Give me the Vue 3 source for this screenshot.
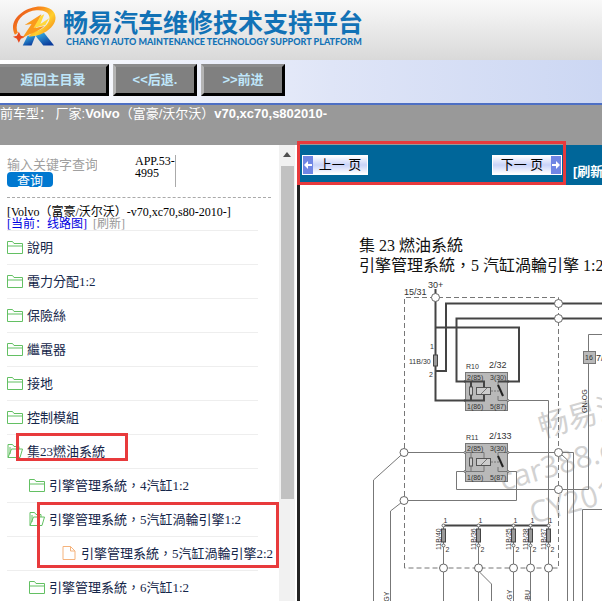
<template>
  <div class="page">
    <header class="banner">
      <svg class="logo" viewBox="0 0 46 42" aria-hidden="true">
        <defs>
          <linearGradient id="ring" x1="0" y1="0" x2="1" y2="0.6">
            <stop offset="0" stop-color="#e2401c" />
            <stop offset="0.5" stop-color="#f98a1c" />
            <stop offset="0.8" stop-color="#ffd02e" />
            <stop offset="1" stop-color="#f79a1c" />
          </linearGradient>
          <linearGradient id="leg" x1="0" y1="0" x2="0.6" y2="1">
            <stop offset="0" stop-color="#3cc0ee" />
            <stop offset="1" stop-color="#0b3c9c" />
          </linearGradient>
        </defs>
        <path d="M16 31 H24 L20 41 H11 Z" fill="url(#leg)" />
        <path d="M24 31 L32 27 L43 41 H32 Z" fill="url(#leg)" />
        <path d="M3 30 C-5 15 13 1 29 1 C43 1 48 11 42 20 C37 27 29 31 17 32 L21 27 C29 26 36 21 38 15 C40 8 33 4 25 5 C12 6 1 17 6 28 Z" fill="url(#ring)" />
        <path d="M13 20 L30 9 L24 23 L33 21 C26 28 18 28 10 34 L20 19 Z" fill="#fa9a1c" />
        <path d="M29 11 L22 23 L34 20 L38 13 L29 19 L33 9 Z" fill="#ffd83a" />
        <path d="M7 27 L9 31 L13 32 L9 34 L7 38 L5 34 L1 32 L5 31 Z" fill="#e8481c" />
      </svg>
      <div class="brand">
        <h1>畅易汽车维修技术支持平台</h1>
        <p>CHANG YI AUTO MAINTENANCE TECHNOLOGY SUPPORT PLATFORM</p>
      </div>
    </header>

    <nav class="toolbar">
      <button class="home">返回主目录</button>
      <button>&lt;&lt;后退.</button>
      <button>&gt;&gt;前进</button>
    </nav>

    <div class="model">前车型： 厂家:<b>Volvo</b>（富豪/沃尔沃）<b>v70,xc70,s802010-</b></div>

    <div class="frames">
      <aside class="side">
        <div class="side-body">
          <div class="search">
            <div class="search-form">
              <input v-model="keyword" type="text" placeholder="输入关键字查询" aria-label="输入关键字查询" />
              <button>查询</button>
            </div>
            <div class="version">APP.53-4995</div>
          </div>
          <div class="current">
            <div>[Volvo（富豪/沃尔沃）-v70,xc70,s80-2010-]</div>
            <div>
              <a class="now" href="#">[当前：线路图]</a>
              <a class="refresh" href="#">[刷新]</a>
            </div>
          </div>
          <ul class="tree">
            <li v-for="item in items" :key="item.text" :class="'level' + item.level">
              <svg v-if="item.icon === 'folder'" class="icon" viewBox="0 0 16 16">
                <path d="M0.5 14.5 V2.5 H5.5 L7 4.5 H15.5 V14.5 Z M0.5 7 H15.5" />
              </svg>
              <svg v-else-if="item.icon === 'open'" class="icon" viewBox="0 0 16 16">
                <path d="M1 14.5 V1.5 H5.5 L7 3.5 H12 V6 M1 14.5 L4.5 6 H15.5 L13 14.5 Z M3 11 V4" />
              </svg>
              <svg v-else class="icon file" viewBox="0 0 16 16">
                <path d="M1 1.5 H8.5 L13 6 V14.5 H1 Z M8.5 1.5 V6 H13" />
              </svg>
              <a href="#">{{ item.text }}</a>
              <span v-if="item.mark" :class="['mark', item.mark]"></span>
            </li>
          </ul>
        </div>
        <div class="scrollbar">
          <span class="arrow"></span>
          <span class="thumb"></span>
        </div>
      </aside>

      <main class="view">
        <div class="pager">
          <button class="prev">
            <svg viewBox="0 0 10 18"><path d="M1 9 L5 5 V8 H9 V10 H5 V13 Z" /></svg>
            <span>上一 页</span>
          </button>
          <button class="next">
            <span>下一 页</span>
            <svg viewBox="0 0 10 18"><path d="M9 9 L5 5 V8 H1 V10 H5 V13 Z" /></svg>
          </button>
          <a href="#">[刷新]</a>
          <span class="mark mark-pager"></span>
        </div>

        <svg class="diagram" viewBox="300 185 302 416">
          <g class="title">
            <text x="359" y="251">集 23 燃油系統</text>
            <text x="359" y="271">引擎管理系統，5 汽缸渦輪引擎 1:2</text>
          </g>

          <g class="watermark">
            <text transform="translate(542 438) rotate(-16)">畅易汽车</text>
            <text transform="translate(503 491) rotate(-16)">car388.com</text>
            <text transform="translate(533 524) rotate(-16)">CY2019</text>
          </g>

          <path class="dash" d="M404.5 568 V297.5 H558.5 V568 Z" />

          <g class="thin">
            <path d="M508 400.5 H548.5 V601" />
            <path d="M508 452.5 H573.5 V601 M562 455 L567.5 460 V601" />
            <path d="M465 452.5 H404 L373.5 480 V601" />
            <path d="M465 471.5 H456.5 V489.5 H588.5 V334.5 H602" />
            <path d="M508 471.5 H516.5 V500.5 H404 L390.5 511 V601" />
            <path d="M443.5 525 V601 M478.5 525 V601 M513.5 525 V601 M530.5 525 V601" />
            <path d="M478.5 571 L491.5 584 V601" />
            <path d="M602 509.5 H582.5 V601" />
          </g>
          <path class="bus" d="M443 525.5 H549" />

          <g v-for="relay in relays" :key="relay.id" :transform="`translate(0 ${relay.dy})`">
            <rect class="box" x="465.5" y="372.5" width="42" height="38" />
            <path class="thin" d="M465 381.5 H484 V400.5 H465 M471 381 V401 M498 381.5 H508 M498 381.5 V386 M498 396 V400.5 H508" />
            <rect class="part" x="469.5" y="387" width="3" height="8" />
            <rect class="part" x="476.5" y="387.5" width="14" height="7" />
            <path class="thin" d="M481 394 L487 388" />
            <path class="thin" d="M491 391 H500" stroke-dasharray="2 1" />
            <path class="switch" d="M498 385 L503 396" />
            <circle v-for="y in [381.5, 400.5]" :key="y" class="node" cx="465" :cy="y" r="1" />
            <circle v-for="y in [381.5, 400.5]" :key="'r' + y" class="node" cx="508" :cy="y" r="1" />
            <g class="pin">
              <text x="467" y="380">2(85)</text>
              <text x="490" y="380">3(30)</text>
              <text x="467" y="409">1(86)</text>
              <text x="490" y="409">5(87)</text>
              <text x="466" y="369">{{ relay.id }}</text>
            </g>
            <text class="code" x="489" y="368">{{ relay.code }}</text>
          </g>

          <g class="thick">
            <path d="M435.5 289 V400.5 H484 V395" />
            <path d="M602 303.5 H446 V371 H435.5" />
            <path d="M602 318.5 H456.5 V381.5 H484 V387" />
            <path d="M435.5 327.5 H519 V381.5 H498" />
            <path d="M471 381.5 V387 M471 395 V400" />
          </g>
          <rect class="fuse" x="433.5" y="355" width="4" height="11" />

          <g class="label">
            <text x="428" y="288">30+</text>
            <text x="404" y="295">15/31</text>
            <text class="small" x="409" y="364">11B/30</text>
            <text class="small" x="430" y="349">1</text>
            <text class="small" x="429" y="377">2</text>
          </g>

          <rect class="box" x="583.5" y="351.5" width="12" height="12" />
          <text class="small" x="585" y="360">16</text>
          <text class="label" x="596" y="361">7/4</text>
          <text class="small" transform="translate(587 413) rotate(-90)">GN-OG</text>

          <g v-for="fuse in fuses" :key="fuse.text">
            <rect class="fuse" :x="fuse.x - 2" y="529" width="4" height="13" />
            <circle class="node" :cx="fuse.x" cy="525.5" r="1.5" />
            <circle class="node" :cx="fuse.x" cy="545.5" r="1.5" />
            <text class="small" :x="fuse.x" y="523">1</text>
            <text class="small" :x="fuse.x + 2" y="552">2</text>
            <text class="small" :transform="`translate(${fuse.x - 3} 550) rotate(-90)`">{{ fuse.text }}</text>
            <circle class="node" :cx="fuse.x" cy="568" r="4" />
          </g>
          <circle v-for="(c, i) in joints" :key="i" class="node" :cx="c[0]" :cy="c[1]" r="4" />

          <text class="small" transform="translate(389 604) rotate(-90)">-GY</text>
          <text class="small" transform="translate(512 602) rotate(-90)">-GY</text>
          <text class="small" transform="translate(530 602) rotate(-90)">-BU</text>
        </svg>
      </main>
    </div>
  </div>
</template>

<script setup>
import { ref } from 'vue'

const keyword = ref('')

const items = [
  { text: '說明', level: 0, icon: 'folder' },
  { text: '電力分配1:2', level: 0, icon: 'folder' },
  { text: '保險絲', level: 0, icon: 'folder' },
  { text: '繼電器', level: 0, icon: 'folder' },
  { text: '接地', level: 0, icon: 'folder' },
  { text: '控制模組', level: 0, icon: 'folder' },
  { text: '集23燃油系統', level: 0, icon: 'open', mark: 'mark-group' },
  { text: '引擎管理系統，4汽缸1:2', level: 1, icon: 'folder' },
  { text: '引擎管理系統，5汽缸渦輪引擎1:2', level: 1, icon: 'open', mark: 'mark-pages' },
  { text: '引擎管理系統，5汽缸渦輪引擎2:2', level: 2, icon: 'file' },
  { text: '引擎管理系統，6汽缸1:2', level: 1, icon: 'folder' }
]

const relays = [
  { id: 'R10', code: '2/32', dy: 0 },
  { id: 'R11', code: '2/133', dy: 71 }
]

const fuses = [
  { x: 443.5, text: '11B/40' },
  { x: 478.5, text: '11B/36' },
  { x: 513.5, text: '11B/35' },
  { x: 530.5, text: '11B/38' },
  { x: 548.5, text: '11B/37' }
]

const joints = [
  [435.5, 297.5],
  [558.5, 303.5],
  [558.5, 318.5],
  [404, 452.5],
  [558.5, 452.5],
  [558.5, 489.5],
  [404, 500.5]
]
</script>

<style>
body {
  background: #fff;
}
</style>

<style scoped>
.page {
  display: flex;
  flex-direction: column;
  height: 100vh;
  overflow: hidden;
  font-family: 'Liberation Sans', 'Noto Sans CJK SC', sans-serif;
  font-size: 13px;
}

a {
  text-decoration: none;
}

.banner {
  display: flex;
  flex: none;
  gap: 6px;
  height: 60px;
  padding: 5px 12px 0;
  box-sizing: border-box;
  background: linear-gradient(#f9f9f9, #d9d9d9);
}

.logo {
  width: 45px;
  height: 42px;
}

.brand {
  color: #1272b6;
  white-space: nowrap;
}

.brand h1 {
  margin: 0;
  font-family: 'Noto Sans CJK SC', sans-serif;
  font-size: 25px;
  line-height: 32px;
}

.brand p {
  margin: 0 0 0 3px;
  font-family: Lato, 'Liberation Sans', sans-serif;
  font-size: 9px;
  font-weight: 900;
  line-height: 10px;
}

.toolbar {
  display: flex;
  flex: none;
  gap: 4px;
  height: 43px;
  padding-top: 4px;
  box-sizing: border-box;
  background: linear-gradient(90deg, #fff, #dfe5f7 55%, #ccd7f3);
}

.toolbar button {
  width: 84px;
  height: 32px;
  padding: 0 0 3px;
  border: 3px solid;
  border-color: #8c8c8c #000 #000 #b4b4b4;
  background: #808080;
  color: #bfe6fa;
  font: bold 13px 'Liberation Sans', 'Noto Sans CJK SC', sans-serif;
}

.toolbar .home {
  width: 109px;
  border-left-width: 0;
}

.model {
  flex: none;
  height: 42px;
  box-sizing: border-box;
  border-top: 2px solid #4d6fc4;
  background: #999;
  color: #fff;
  line-height: 18px;
  white-space: nowrap;
}

.frames {
  display: flex;
  flex: 1;
  min-height: 0;
}

.side {
  display: flex;
  flex: none;
  width: 300px;
  box-sizing: border-box;
  border-right: 3px solid #222;
}

.side-body {
  flex: 1;
  padding: 10px 8px 0 7px;
  overflow: hidden;
  font-family: 'Liberation Serif', 'Noto Sans CJK SC', serif;
}

.search {
  display: flex;
  gap: 38px;
  height: 42px;
  border-bottom: 1px dashed #aaa;
}

.search-form {
  display: flex;
  flex-direction: column;
  align-items: flex-start;
  width: 90px;
}

.search-form input {
  width: 90px;
  height: 17px;
  padding: 3px 0 0;
  box-sizing: border-box;
  border: 0;
  background: none;
  font: 13px/14px 'Liberation Serif', 'Noto Sans CJK SC', serif;
}

.search-form input::placeholder {
  color: #a0a0a0;
}

.search-form button {
  width: 46px;
  height: 15px;
  padding: 0;
  border: 0;
  border-radius: 4px;
  background: #0078d0;
  color: #fff;
  font: 13px/14px 'Noto Sans CJK SC', sans-serif;
}

.version {
  width: 40px;
  height: 32px;
  border-right: 1px solid #aaa;
  font-size: 12px;
  line-height: 12px;
}

.current {
  padding-top: 8px;
  font-size: 12px;
  line-height: 12px;
  white-space: nowrap;
}

.current .now {
  margin-right: 6px;
  color: #0000e0;
}

.current .refresh {
  color: #999;
}

.tree {
  margin: 0;
  padding: 0;
  list-style: none;
}

.tree li {
  display: flex;
  align-items: center;
  gap: 4px;
  position: relative;
  width: 251px;
  height: 34px;
  padding-bottom: 2px;
  box-sizing: border-box;
  border-top: 1px solid #eee;
}

.tree a {
  color: #14264a;
  font-family: 'Liberation Serif', 'Noto Sans CJK TC', serif;
  white-space: nowrap;
}

.tree .level1 {
  padding-left: 22px;
}

.tree .level2 {
  padding-left: 55px;
  gap: 3px;
}

.icon {
  flex: none;
  width: 16px;
  height: 16px;
  fill: none;
  stroke: #63c063;
}

.icon.file {
  stroke: #f5b37c;
}

.mark {
  position: absolute;
  z-index: 1;
  box-sizing: border-box;
  border: 3px solid #e83a3c;
  pointer-events: none;
}

.mark-group {
  top: -2px;
  left: 9px;
  width: 112px;
  height: 28px;
}

.mark-pages {
  top: -1px;
  left: 30px;
  width: 242px;
  height: 66px;
}

.scrollbar {
  display: flex;
  flex: none;
  flex-direction: column;
  align-items: center;
  width: 16px;
  margin-right: 2px;
  background: #f1f1f1;
}

.arrow {
  margin: 7px 0 9px;
  border: 4px solid transparent;
  border-top-width: 0;
  border-bottom: 5px solid #505050;
}

.thumb {
  width: 13px;
  height: 73%;
  background: #c1c1c1;
}

.view {
  flex: 1;
  min-width: 0;
}

.pager {
  display: flex;
  align-items: center;
  position: relative;
  height: 40px;
  padding-left: 2px;
  background: #006699;
}

.pager button {
  display: flex;
  flex: none;
  align-items: center;
  height: 20px;
  padding: 0;
  border: 1px solid #fff;
  background: linear-gradient(#fff, #c9d3f8 50%, #fff);
  color: #000;
  font: 13px/16px 'Liberation Sans', 'Noto Sans CJK SC', sans-serif;
  white-space: nowrap;
}

.pager button span {
  flex: 1;
}

.pager button svg {
  width: 10px;
  height: 18px;
  background: #6f86e4;
  fill: #fff;
}

.pager .prev {
  width: 66px;
}

.pager .next {
  width: 70px;
  margin-left: 124px;
}

.pager a {
  margin: 10px 0 0 11px;
  color: #fff;
  font-weight: bold;
  white-space: nowrap;
}

.mark-pager {
  top: -4px;
  left: -3px;
  width: 269px;
  height: 44px;
}

.diagram {
  display: block;
  width: 302px;
  height: 416px;
  fill: none;
  font-family: 'Liberation Sans', sans-serif;
}

.diagram text {
  fill: #333;
}

.diagram .title {
  font: 16px 'Liberation Serif', 'Noto Sans CJK TC', serif;
}

.diagram .title text {
  fill: #111;
}

.label,
.code {
  font-size: 9px;
}

.small,
.pin {
  font-size: 7px;
}

.thin {
  stroke: #777;
}

.bus,
.thick {
  stroke: #444;
  stroke-width: 2;
}

.switch {
  stroke: #222;
  stroke-width: 2;
}

.dash {
  stroke: #777;
  stroke-dasharray: 5 3;
}

.box {
  fill: #b9b9b9;
  stroke: #777;
}

.part {
  fill: #ccc;
  stroke: #555;
}

.fuse {
  fill: #999;
  stroke: #444;
}

.node {
  fill: #fff;
  stroke: #666;
}

.watermark {
  font: 30px 'Open Sans', 'Noto Sans CJK SC', sans-serif;
}

.diagram .watermark text {
  fill: #d2d2d2;
}
</style>
